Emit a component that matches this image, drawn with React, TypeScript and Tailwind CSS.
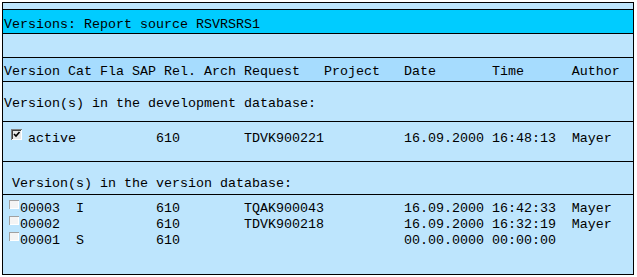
const mono = "font-[family-name:Liberation_Mono,DejaVu_Sans_Mono,monospace] text-[13.333px] leading-4 whitespace-pre text-black";

function CheckedBox() {
  return (
    <svg width="11" height="11" viewBox="0 0 11 11" className="shrink-0">
      <rect x="0" y="0" width="11" height="11" fill="#808080" />
      <rect x="1" y="1" width="10" height="10" fill="#ffffff" />
      <rect x="1" y="1" width="9" height="9" fill="#404040" />
      <rect x="2" y="2" width="8" height="8" fill="#e8e8e8" />
      <path d="M3 5 L5 7 L8.5 3" stroke="#000" strokeWidth="1.6" fill="none" />
    </svg>
  );
}

function EmptyBox() {
  return (
    <svg width="10" height="9" viewBox="0 0 10 9" className="shrink-0">
      <rect x="0" y="0" width="10" height="9" fill="#a0a0a0" />
      <rect x="1" y="1" width="9" height="8" fill="#ffffff" />
      <rect x="1" y="1" width="8" height="7" fill="#f4f4f4" />
    </svg>
  );
}

const versions = [
  { nr: '00003', cat: 'I', req: 'TQAK900043', date: '16.09.2000', time: '16:42:33', author: 'Mayer' },
  { nr: '00002', cat: ' ', req: 'TDVK900218', date: '16.09.2000', time: '16:32:19', author: 'Mayer' },
  { nr: '00001', cat: 'S', req: '          ', date: '00.00.0000', time: '00:00:00', author: '' },
];

export default function App() {
  return (
    <div className="w-[637px] h-[277px] bg-white pt-[2px] pl-[2px]">
      <div className="w-[632px] h-[273px] border border-black bg-[#bde5fd] flex flex-col">
        <div className="h-[7px] border-b border-black" />
        <div className="h-[24px] bg-[#00ccff] border-b border-black pt-[7px] pl-[1px]">
          <div className={mono}>Versions: Report source RSVRSRS1</div>
        </div>
        <div className="h-[24px] border-b border-black" />
        <div className="h-[24px] bg-[#a6dcfe] border-b border-black pt-[6px] pl-[1px]">
          <div className={mono}>{'Version Cat Fla SAP Rel. Arch Request   Project   Date       Time      Author'}</div>
        </div>
        <div className="h-[40px] border-b border-black pt-[14px] pl-[1px]">
          <div className={mono}>Version(s) in the development database:</div>
        </div>
        <div className="h-[40px] border-b border-black pt-[7px] pl-[8px] flex items-start">
          <CheckedBox />
          <div className={`${mono} ml-[6px] pt-[2px]`}>{'active          610        TDVK900221          16.09.2000 16:48:13  Mayer'}</div>
        </div>
        <div className="h-[33px] border-b border-black pt-[14px] pl-[1px]">
          <div className={mono}>{' Version(s) in the version database:'}</div>
        </div>
        <div className="flex-1 pt-[5px] pl-[6px] flex flex-col">
          {versions.map((v) => (
            <div key={v.nr} className="flex items-start h-4">
              <EmptyBox />
              <div className={`${mono} ml-[1px] pt-[1px]`}>
                {`${v.nr}  ${v.cat}         610        ${v.req}          ${v.date} ${v.time}  ${v.author}`}
              </div>
            </div>
          ))}
        </div>
      </div>
    </div>
  );
}
